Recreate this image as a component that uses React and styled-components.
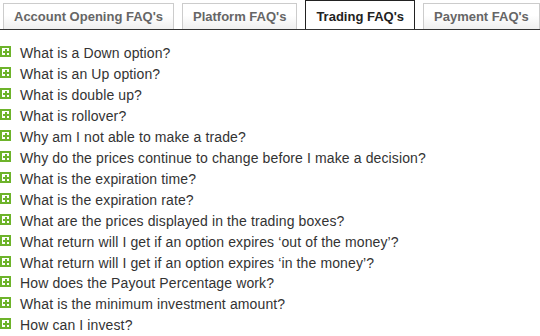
import React from 'react';
import styled, { createGlobalStyle } from 'styled-components';

const GlobalStyle = createGlobalStyle`
  html, body {
    margin: 0;
    padding: 0;
    background: #fff;
  }
  body {
    font-family: 'Liberation Sans', Arial, sans-serif;
  }
`;

const Page = styled.div`
  width: 540px;
  height: 336px;
  overflow: hidden;
  background: #fff;
`;

const TabBar = styled.ul`
  display: flex;
  align-items: flex-end;
  gap: 8px;
  margin: 0;
  padding: 0 0 0 3px;
  list-style: none;
  height: 29px;
  border-bottom: 1px solid #333;
`;

const Tab = styled.li`
  box-sizing: border-box;
  height: ${(p) => (p.active ? '29px' : '26px')};
  padding: 0 10px 0 10px;
  display: flex;
  align-items: center;
  padding-top: ${(p) => (p.active ? '3px' : '0')};
  font-size: 13px;
  font-weight: bold;
  white-space: nowrap;
  color: ${(p) => (p.active ? '#222' : '#666')};
  background: ${(p) =>
    p.active ? '#fff' : 'linear-gradient(to bottom, #fff 0%, #fff 45%, #efefef 100%)'};
  border: 1px solid ${(p) => (p.active ? '#222' : '#ccc')};
  border-bottom: none;
  cursor: pointer;
`;

const List = styled.ul`
  margin: 0;
  padding: 13px 0 0 0;
  list-style: none;
`;

const Item = styled.li`
  display: flex;
  align-items: center;
  gap: 9px;
  height: 20.92px;
  font-size: 14px;
  letter-spacing: 0.12px;
  color: #333;
  cursor: pointer;
`;

const Plus = styled.svg`
  display: block;
  flex: 0 0 11px;
  width: 11px;
  height: 11px;
  margin-top: -3px;
  shape-rendering: crispEdges;
`;

const PlusIcon = () => (
  <Plus viewBox="0 0 11 11">
    <rect x="0" y="0" width="11" height="11" fill="#6db32a" />
    <rect x="2" y="2" width="7" height="7" fill="#fff" />
    <rect x="5" y="3" width="2" height="6" fill="#6db32a" />
    <rect x="3" y="5" width="6" height="2" fill="#6db32a" />
  </Plus>
);

const tabs = ["Account Opening FAQ's", "Platform FAQ's", "Trading FAQ's", "Payment FAQ's"];

const questions = [
  'What is a Down option?',
  'What is an Up option?',
  'What is double up?',
  'What is rollover?',
  'Why am I not able to make a trade?',
  'Why do the prices continue to change before I make a decision?',
  'What is the expiration time?',
  'What is the expiration rate?',
  'What are the prices displayed in the trading boxes?',
  'What return will I get if an option expires \u2018out of the money\u2019?',
  'What return will I get if an option expires \u2018in the money\u2019?',
  'How does the Payout Percentage work?',
  'What is the minimum investment amount?',
  'How can I invest?',
];

export default function App() {
  return (
    <Page>
      <GlobalStyle />
      <TabBar>
        {tabs.map((t, i) => (
          <Tab key={t} active={i === 2}>{t}</Tab>
        ))}
      </TabBar>
      <List>
        {questions.map((q) => (
          <Item key={q}>
            <PlusIcon />
            <span>{q}</span>
          </Item>
        ))}
      </List>
    </Page>
  );
}
